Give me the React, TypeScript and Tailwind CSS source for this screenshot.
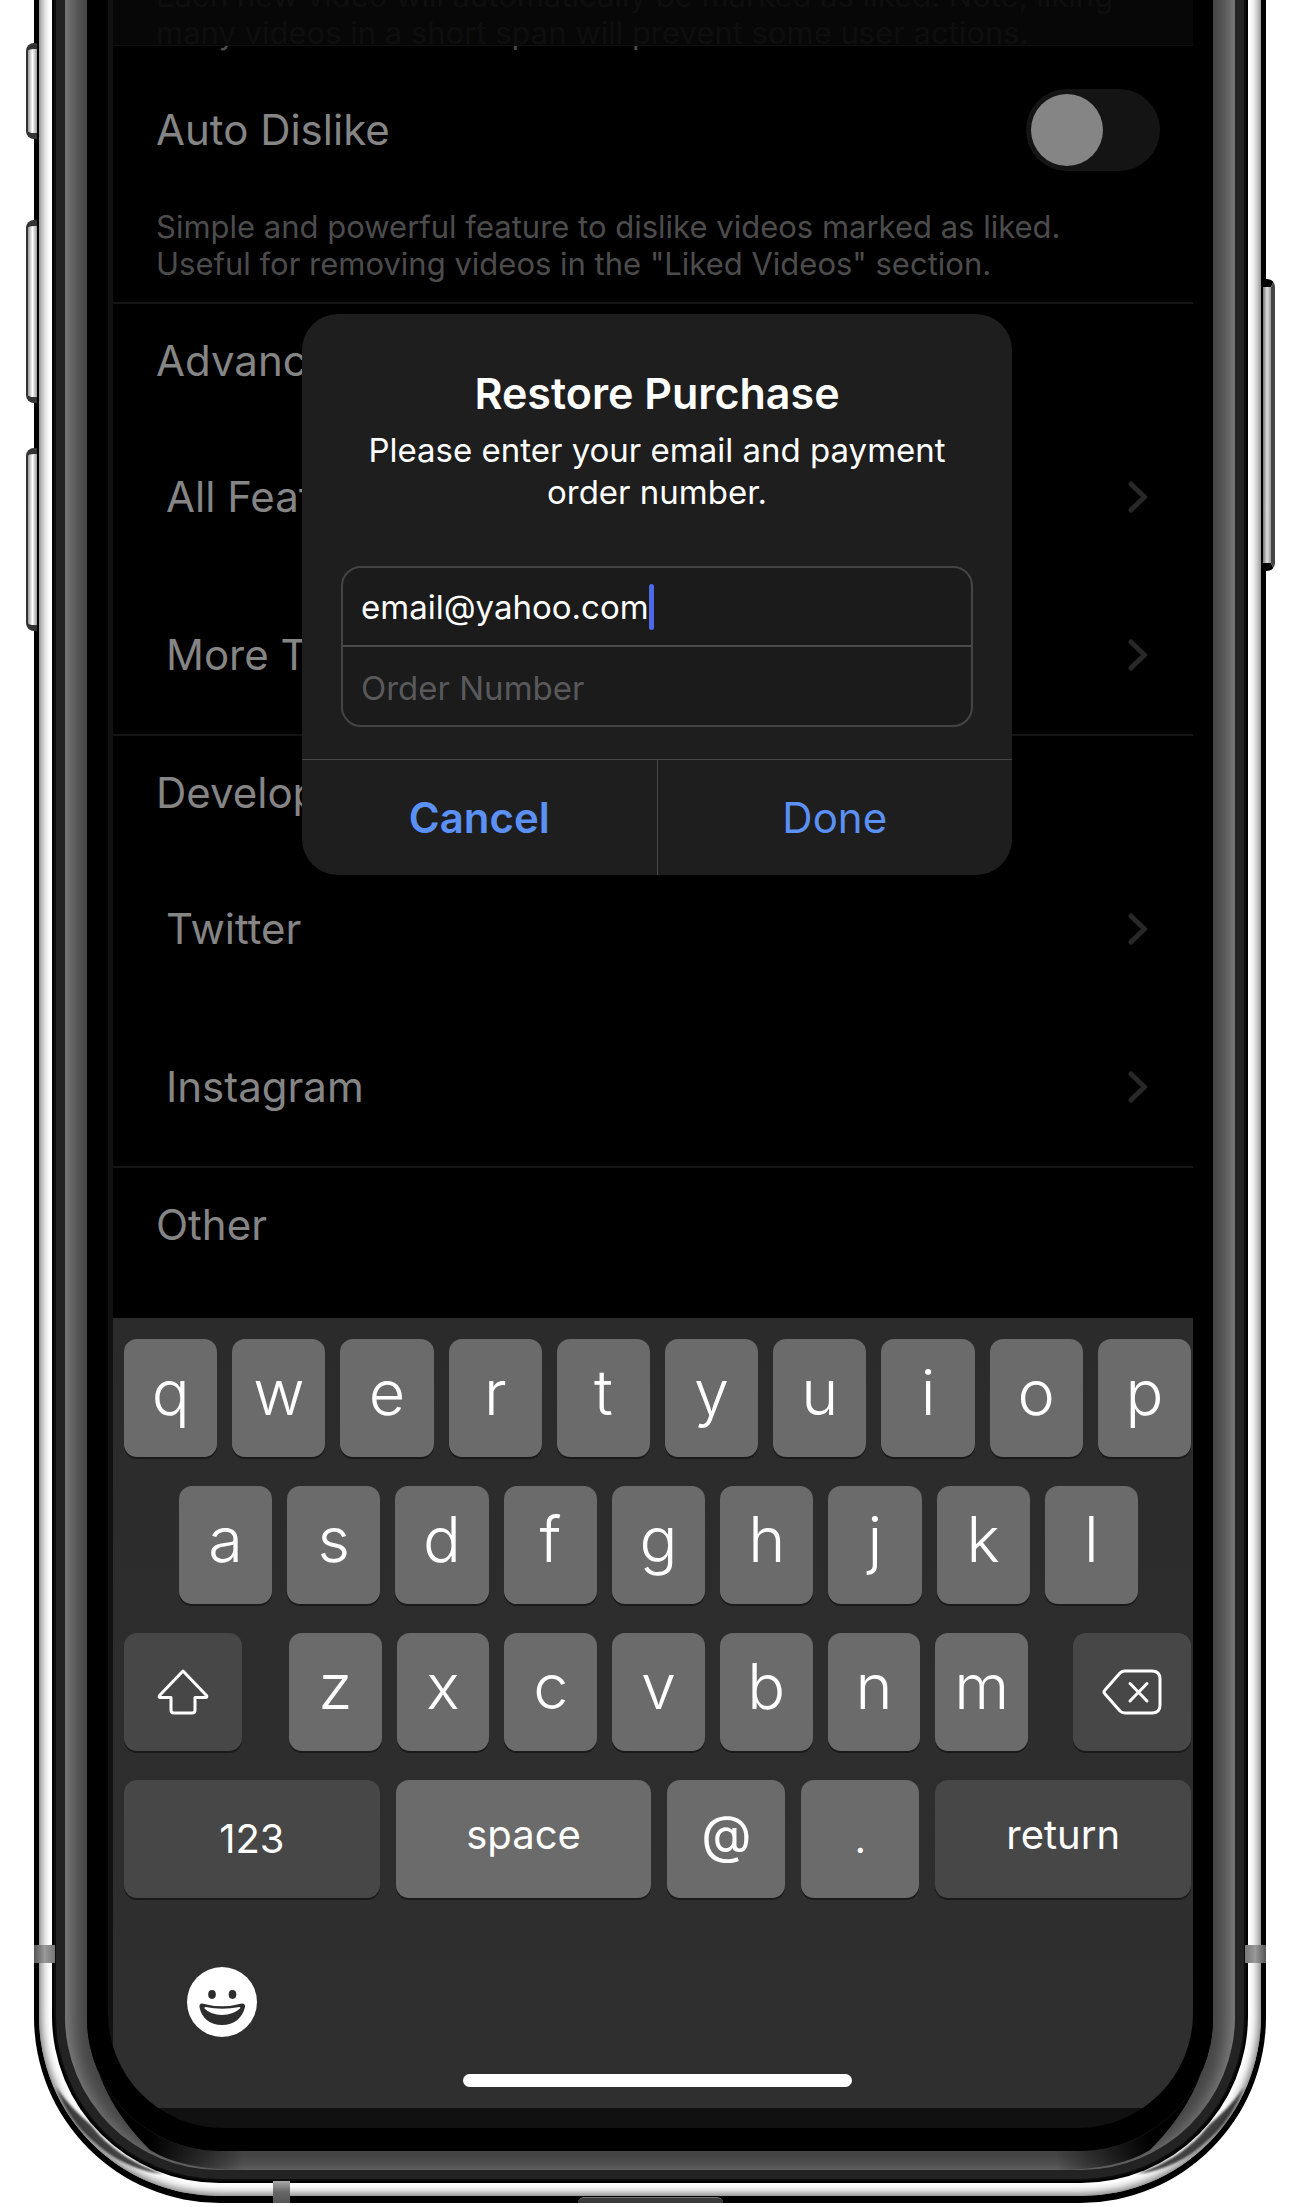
import { useState } from "react";

function Chevron() {
  return (
    <svg width="20" height="32" viewBox="0 0 20 32" fill="none" stroke="#282828" strokeWidth="5" strokeLinecap="round" strokeLinejoin="round" aria-hidden="true">
      <path d="M3 3 L16.5 16 L3 29" />
    </svg>
  );
}

function ShiftIcon() {
  return (
    <svg width="52" height="46" viewBox="0 0 52 46" fill="none" stroke="#fff" strokeWidth="3" strokeLinejoin="round" aria-hidden="true">
      <path d="M26 2 L49.5 26.5 Q50.5 28.5 48.5 28.5 H38 V41 Q38 44 35 44 H17 Q14 44 14 41 V28.5 H3.5 Q1.5 28.5 2.5 26.5 Z" />
    </svg>
  );
}

function DeleteIcon() {
  return (
    <svg width="60" height="46" viewBox="0 0 60 46" fill="none" stroke="#fff" strokeWidth="3" strokeLinejoin="round" strokeLinecap="round" aria-hidden="true">
      <path d="M23 2 H50 Q58 2 58 10 V36 Q58 44 50 44 H23 Q20 44 18 42 L3 25 Q1 23 3 21 L18 4 Q20 2 23 2 Z" />
      <path d="M28 14.5 L45 32 M45 14.5 L28 32" />
    </svg>
  );
}

function EmojiIcon() {
  return (
    <svg width="70" height="70" viewBox="0 0 70 70" aria-hidden="true">
      <circle cx="35" cy="35" r="35" fill="#fff" />
      <ellipse cx="25" cy="27.5" rx="3.8" ry="4.4" fill="#2d2d2d" />
      <ellipse cx="45.5" cy="27.5" rx="3.8" ry="4.4" fill="#2d2d2d" />
      <path d="M15 36.5 Q35 42 55 36.5 Q58.5 36.5 58 40 C55.5 51 47 58 35 58 C23 58 14.5 51 12.5 40 Q12 36.5 15 36.5 Z" fill="#2d2d2d" />
      <path d="M18.5 40 Q35 43.5 52.5 40 Q54 40 53 41.5 Q46 48 35 48 Q24 48 17.5 41.5 Q17 40 18.5 40 Z" fill="#fff" />
    </svg>
  );
}

function CornerShine({ id, className }: { id: string; className: string }) {
  return (
    <svg width="240" height="240" viewBox="0 0 240 240" fill="none" className={className} aria-hidden="true">
      <defs>
        <linearGradient id={`${id}-fade`} gradientUnits="userSpaceOnUse" x1="116" y1="0" x2="210" y2="0">
          <stop offset="0" stopColor="#000" />
          <stop offset="0.3" stopColor="#000" stopOpacity="0.7" />
          <stop offset="1" stopColor="#000" stopOpacity="0" />
        </linearGradient>
        <filter id={`${id}-soft`}>
          <feGaussianBlur stdDeviation="1" />
        </filter>
      </defs>
      <path d="M53 40 C54 97 71 142 116 187 Q148 207 210 207 L210 188 H186 A133 133 0 0 1 53 55 Z" fill={`url(#${id}-fade)`} />
      <path d="M22 124 C34 142 46 152 57 162 C74 184 100 202 130 211 C100 208 76 194 60 179 C44 166 30 146 22 124 Z" fill="#222" opacity="0.85" filter={`url(#${id}-soft)`} />
    </svg>
  );
}

function SideButtons() {
  const left =
    "absolute -left-2 w-[11px] rounded-l-lg border-l-2 border-y-6 border-[#333] bg-linear-to-r from-[#999] via-white to-[#999]";
  return (
    <div aria-hidden="true">
      <div className={`${left} top-[83px] h-24`} />
      <div className={`${left} top-[260px] h-[183px]`} />
      <div className={`${left} top-[488px] h-[183px]`} />
      <div className="absolute -right-[9px] top-[319px] h-[292px] w-[12px]">
        <div className="h-full rounded-r-lg border-y-8 border-r-4 border-y-black border-r-[#444] bg-linear-to-r from-[#777] via-[#e0e0e0] to-[#999]" />
      </div>
    </div>
  );
}

function FrameDetails() {
  return (
    <div className="pointer-events-none" aria-hidden="true">
      <CornerShine id="bl" className="absolute bottom-0 left-0" />
      <CornerShine id="br" className="absolute right-0 bottom-0 -scale-x-100" />
      <div className="absolute bottom-60 left-0 h-[18px] w-[21px] bg-linear-to-r from-[#555] via-[#999] to-[#777]" />
      <div className="absolute right-0 bottom-60 h-[18px] w-[21px] bg-linear-to-l from-[#555] via-[#999] to-[#777]" />
      <div className="absolute bottom-0 left-[239px] h-[22px] w-[17px] bg-linear-to-t from-[#555] via-[#666] to-[#aaa]" />
      <div className="absolute bottom-0 left-[544px] h-[6px] w-[145px] rounded-t-full border-t border-[#777] bg-[#3a3a3a]" />
    </div>
  );
}

function Section({ title, rows }: { title: string; rows: string[] }) {
  return (
    <section className="border-t-2 border-[#141414] text-[42px] leading-[52px] text-[#858585]">
      <h2 className="flex h-[114px] items-center pl-[43px]">{title}</h2>
      {rows.map((row) => (
        <a key={row} href="#" className="flex h-[158px] items-center justify-between pr-[53px] pl-[53px]">
          {row}
          <Chevron />
        </a>
      ))}
    </section>
  );
}

function AutoDislike() {
  const [on, setOn] = useState(false);
  return (
    <section>
      <div className="flex h-[157px] items-center justify-between pr-[41px] pl-[43px]">
        <label htmlFor="auto-dislike" className="text-[42px] leading-[52px] text-[#858585]">
          Auto Dislike
        </label>
        <input
          id="auto-dislike"
          type="checkbox"
          role="switch"
          checked={on}
          onChange={(e) => setOn(e.target.checked)}
          className="h-[82px] w-[134px] appearance-none rounded-full bg-[#141414] p-[5px] before:block before:size-[72px] before:rounded-full before:bg-[#858585] checked:before:ml-[52px]"
        />
      </div>
      <p className="px-[43px] pb-5 text-[31px] leading-[37px] text-[#4c4c4c]">
        Simple and powerful feature to dislike videos marked as liked.
        <br />
        Useful for removing videos in the "Liked Videos" section.
      </p>
    </section>
  );
}

function RestoreDialog() {
  const [email, setEmail] = useState("email@yahoo.com");
  const [order, setOrder] = useState("");
  return (
    <div
      role="dialog"
      aria-labelledby="restore-title"
      className="absolute top-[314px] left-1/2 w-[710px] -translate-x-1/2 overflow-hidden rounded-[36px] bg-[#1e1e1e] text-white"
    >
      <div className="px-[39px] pt-[54px] pb-8 text-center">
        <h1 id="restore-title" className="text-[43px] leading-[50px] font-semibold">
          Restore Purchase
        </h1>
        <p className="mt-[11px] text-[33px] leading-[42px]">
          Please enter your email and payment
          <br />
          order number.
        </p>
        <div className="mt-[53px] rounded-[20px] border-2 border-[#444] bg-[#1b1b1b] text-[33px]">
          <div className="flex h-[79px] items-center border-b-2 border-[#4a4a4a] px-[18px]">
            <input
              type="email"
              aria-label="Email"
              value={email}
              onChange={(e) => setEmail(e.target.value)}
              className="field-sizing-content bg-transparent pt-[3px] outline-none"
            />
            <span className="h-[46px] w-[5px] rounded-sm bg-[#4b69e8]" />
          </div>
          <input
            type="text"
            aria-label="Order Number"
            placeholder="Order Number"
            value={order}
            onChange={(e) => setOrder(e.target.value)}
            className="block h-[78px] w-full bg-transparent px-[18px] pt-[3px] outline-none placeholder:text-[#59595c]"
          />
        </div>
      </div>
      <div className="flex h-[116px] divide-x divide-[#484848] border-t border-[#484848] text-[42px] text-[#5b91f5]">
        <button type="button" className="flex-1 font-semibold">Cancel</button>
        <button type="button" className="flex-1">Done</button>
      </div>
    </div>
  );
}

const keyBase = "flex h-[118px] items-center justify-center rounded-[13px] text-white shadow-[0_2px_0_#1a1a1a]";

function LetterKeys({ letters }: { letters: string }) {
  return (
    <>
      {letters.split("").map((letter) => (
        <button key={letter} type="button" className={`${keyBase} flex-1 bg-[#6b6b6b] pb-3 text-[63px] leading-none font-[350]`}>
          {letter}
        </button>
      ))}
    </>
  );
}

function Keyboard() {
  return (
    <div className="bg-linear-to-b from-[#2b2b2b] to-[#2f2f2f] pt-[21px] pr-[10px] pb-[21px] pl-[11px]">
      <div className="flex flex-col gap-[29px]">
        <div className="flex gap-[15px]"><LetterKeys letters="qwertyuiop" /></div>
        <div className="flex gap-[15px] pl-[55px] pr-[53px]"><LetterKeys letters="asdfghjkl" /></div>
        <div className="flex justify-between">
          <button type="button" aria-label="Shift" className={`${keyBase} w-[118px] bg-[#474747]`}><ShiftIcon /></button>
          <div className="mr-[45px] ml-[47px] flex flex-1 gap-[15px]"><LetterKeys letters="zxcvbnm" /></div>
          <button type="button" aria-label="Delete" className={`${keyBase} w-[118px] bg-[#474747]`}><DeleteIcon /></button>
        </div>
        <div className="flex gap-4 text-[40px] leading-none">
          <button type="button" className={`${keyBase} flex-1 bg-[#474747]`}>123</button>
          <button type="button" className={`${keyBase} flex-1 bg-[#6b6b6b] pb-2`}>space</button>
          <button type="button" className={`${keyBase} w-[118px] bg-[#6b6b6b] pb-2 text-[52px]`}>@</button>
          <button type="button" className={`${keyBase} w-[118px] bg-[#6b6b6b]`}>.</button>
          <button type="button" className={`${keyBase} flex-1 bg-[#474747] pb-2`}>return</button>
        </div>
      </div>
      <button type="button" aria-label="Emoji" className="mt-[69px] ml-[63px] block rounded-full"><EmojiIcon /></button>
      <div className="mx-auto mt-[37px] h-[13px] w-[389px] rounded-full bg-white" />
    </div>
  );
}

export default function App() {
  return (
    <main className="overflow-hidden bg-white px-[34px] pb-1 font-['Inter',sans-serif]">
      <div className="relative -mt-10">
        <SideButtons />
        <div className="rounded-b-[186px] bg-black px-[5px] pb-[7px]">
          <div className="rounded-b-[180px] bg-white px-[13px] pb-[13px] shadow-[inset_0_0_10px_2px_#666]">
            <div className="rounded-b-[167px] bg-black px-[2px] pb-[2px]">
              <div className="rounded-b-[165px] border-x-2 border-b-2 border-[#0c0c0c] bg-[#232323] px-[9px] pb-[9px]">
                <div className="rounded-b-[154px] bg-[#444] px-[22px] pb-[19px] shadow-[inset_0_9px_20px_6px_#8c8c8c]">
                  <div className="rounded-b-[133px] bg-black pr-5 pb-[23px] pl-[21px]">
                    <div className="overflow-hidden rounded-b-[115px] bg-[#111] pt-10 pb-5 pl-[5px]">
                      <div className="relative -mr-2 overflow-hidden bg-black">
                        <p className="-mt-[23px] px-[43px] text-[31px] leading-[37px] text-[#4c4c4c]">
                          Each new video will automatically be marked as liked. Note, liking
                          <br />
                          many videos in a short span will prevent some user actions.
                        </p>
                        <div className="absolute inset-x-0 top-0 h-[46px] border-b border-[#0e0e0e] bg-[#080808]/90" />
                        <AutoDislike />
                        <Section title="Advanced" rows={["All Features", "More Tweaks"]} />
                        <Section title="Developer" rows={["Twitter", "Instagram"]} />
                        <div className="pb-9"><Section title="Other" rows={[]} /></div>
                        <Keyboard />
                        <RestoreDialog />
                      </div>
                    </div>
                  </div>
                </div>
              </div>
            </div>
          </div>
        </div>
        <FrameDetails />
      </div>
    </main>
  );
}
